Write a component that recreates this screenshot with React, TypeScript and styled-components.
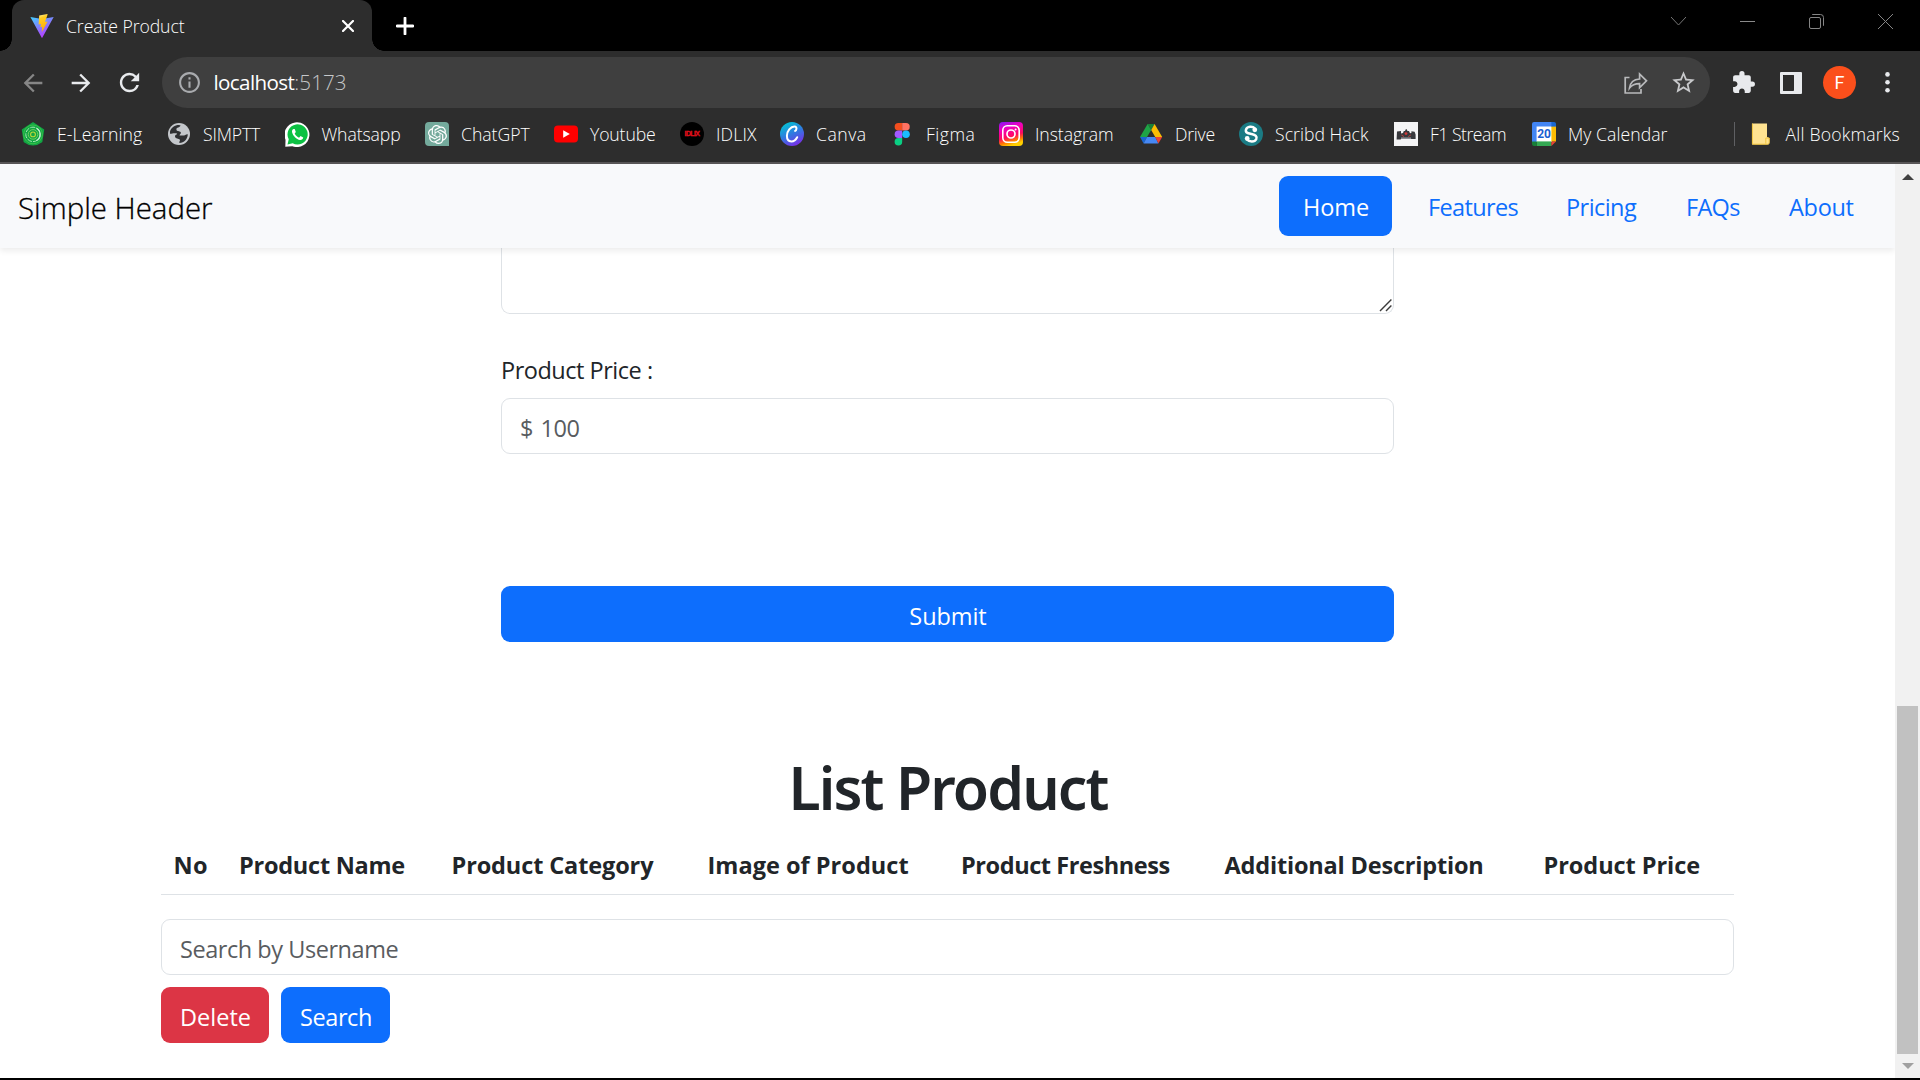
import React from 'react';
import styled, { createGlobalStyle } from 'styled-components';
import { MdArrowBack, MdArrowForward, MdExtension, MdInfoOutline, MdRefresh, MdStarBorder } from 'react-icons/md';
import { SiOpenai } from 'react-icons/si';

const GlobalStyle = createGlobalStyle`
  *, *::before, *::after { box-sizing: border-box; }
  body {
    margin: 0;
    background: #fff;
    font-family: 'Open Sans', 'Noto Sans', sans-serif;
    overflow: hidden;
  }
`;

/* ---------- browser window ---------- */

const Window = styled.div`
  width: 1920px;
  height: 1080px;
  display: flex;
  flex-direction: column;
  border-bottom: 2px solid #000;
  overflow: hidden;
`;

const TabStrip = styled.div`
  height: 51px;
  flex: none;
  display: flex;
  align-items: center;
  background: #000;
  padding-left: 12px;
`;

const Tab = styled.div`
  position: relative;
  width: 360px;
  height: 51px;
  display: flex;
  align-items: center;
  padding: 0 18px;
  background: #2d2d2d;
  border-radius: 12px 12px 0 0;

  &::before,
  &::after {
    content: '';
    position: absolute;
    bottom: 0;
    width: 12px;
    height: 12px;
  }
  &::before {
    left: -12px;
    background: radial-gradient(circle at 0 0, transparent 11.5px, #2d2d2d 12px);
  }
  &::after {
    right: -12px;
    background: radial-gradient(circle at 100% 0, transparent 11.5px, #2d2d2d 12px);
  }
`;

const ChromeText = styled.span<{ $spacing?: number; $weight?: number; $size?: number; $color?: string }>`
  font-size: ${(p) => p.$size ?? 17.64}px;
  font-weight: ${(p) => p.$weight ?? 300};
  letter-spacing: ${(p) => p.$spacing ?? 0}px;
  color: ${(p) => p.$color ?? '#fff'};
  line-height: 24px;
  white-space: nowrap;
`;

const TabTitle = styled(ChromeText)`
  margin-left: 12px;
  flex: 1;
`;

const NewTab = styled.div`
  margin-left: 24px;
  width: 18px;
  height: 18px;
  display: flex;
`;

const WindowControls = styled.div`
  margin-left: auto;
  padding: 0 27px 8px 0;
  display: flex;
  gap: 54px;
  svg { display: block; }
`;

const Toolbar = styled.div`
  height: 57px;
  flex: none;
  display: flex;
  align-items: center;
  padding: 6px 0 0 19px;
  background: #2d2d2d;
`;

const ToolIcon = styled.div<{ $width: number; $color?: string; $indent?: number }>`
  width: ${(p) => p.$width}px;
  padding-left: ${(p) => p.$indent ?? 0}px;
  flex: none;
  display: flex;
  align-items: center;
  color: ${(p) => p.$color ?? '#e8eaed'};
  svg { display: block; flex: none; }
`;

const Omnibox = styled.div`
  width: 1548px;
  height: 51px;
  flex: none;
  display: flex;
  align-items: center;
  padding: 0 14px 0 14.5px;
  border-radius: 26px;
  background: #3f3f3f;
`;

const Url = styled.div`
  flex: 1;
  display: flex;
  margin-left: 11px;
  padding-bottom: 1px;
`;

const Avatar = styled.div`
  width: 33px;
  height: 33px;
  flex: none;
  border-radius: 50%;
  background: #fb4f1b;
  color: #fff;
  font: 400 18px/33px Roboto, sans-serif;
  text-align: center;
`;

const BookmarkBar = styled.div`
  height: 56px;
  flex: none;
  display: flex;
  align-items: center;
  padding: 0 0 2px 21px;
  background: #2d2d2d;
  border-bottom: 2px solid #575556;
`;

const Bookmark = styled.div<{ $width: number }>`
  width: ${(p) => p.$width}px;
  flex: none;
  display: flex;
  align-items: center;
  gap: 12px;
  svg { display: block; flex: none; }
`;

const BookmarkDivider = styled.div`
  width: 1px;
  height: 24px;
  margin: 0 15px 0 auto;
  background: #5f6063;
`;

/* ---------- page ---------- */

const Viewport = styled.div`
  flex: 1;
  min-height: 0;
  display: flex;
`;

const Page = styled.div`
  flex: 1;
  display: flex;
  flex-direction: column;
  background: #fff;
  color: #212529;
  overflow: hidden;
`;

const Header = styled.header`
  position: relative;
  height: 84px;
  flex: none;
  display: flex;
  align-items: center;
  justify-content: space-between;
  padding: 0 16px 0 18px;
  background: #f8f9fb;
  box-shadow: 0 3px 6px rgba(0, 0, 0, 0.075);
`;

const Brand = styled.div`
  padding-top: 5px;
  font-size: 29.4px;
  font-weight: 300;
  line-height: 45px;
  color: #000;
  -webkit-text-stroke: 0.3px #000;
`;

const Nav = styled.nav`
  display: flex;
`;

const NavLink = styled.a<{ $active?: boolean; $width: number; $spacing: number }>`
  width: ${(p) => p.$width}px;
  height: 60px;
  padding: 1px 0 0 24px;
  margin-right: ${(p) => (p.$active ? 12 : 0)}px;
  border-radius: 9px;
  background: ${(p) => (p.$active ? '#0d6efd' : 'transparent')};
  color: ${(p) => (p.$active ? '#fff' : '#0d6efd')};
  font-size: 23.5px;
  line-height: 60px;
  letter-spacing: ${(p) => p.$spacing}px;
  white-space: nowrap;
`;

const Form = styled.div`
  width: 893px;
  margin-left: 501px;
  display: flex;
  flex-direction: column;
`;

const TextArea = styled.div`
  height: 66px;
  display: flex;
  align-items: flex-end;
  justify-content: flex-end;
  padding: 0 0 1px;
  border: 1px solid #dee2e6;
  border-top: 0;
  border-radius: 0 0 9px 9px;
`;

const Label = styled.label`
  margin: 38px 0 10px;
  font-size: 23.5px;
  line-height: 36px;
  letter-spacing: -0.48px;
`;

const Field = styled.div<{ $spacing: number; $wordSpacing?: number }>`
  height: 56px;
  padding: 2px 18px 0;
  border: 1px solid #dee2e6;
  border-radius: 9px;
  color: #595c5f;
  font-size: 23.5px;
  line-height: 54px;
  letter-spacing: ${(p) => p.$spacing}px;
  word-spacing: ${(p) => p.$wordSpacing ?? 0}px;
`;

const Button = styled.div<{ $width: number; $danger?: boolean; $spacing: number }>`
  width: ${(p) => p.$width}px;
  height: 56px;
  padding: 2px 0 0 1px;
  border-radius: 9px;
  background: ${(p) => (p.$danger ? '#dc3545' : '#0d6efd')};
  color: #fff;
  font-size: 23.5px;
  line-height: 56px;
  letter-spacing: ${(p) => p.$spacing}px;
  text-align: center;
`;

const SubmitRow = styled.div`
  margin-top: 132px;
`;

const List = styled.section`
  width: 1573px;
  margin: 109px 0 0 161px;
  display: flex;
  flex-direction: column;
`;

const Title = styled.h1`
  margin: 0 0 12px;
  padding-left: 1px;
  font: 600 58.8px/72px 'Noto Sans', sans-serif;
  letter-spacing: -1.86px;
  text-align: center;
`;

const Table = styled.table`
  width: 1573px;
  height: 60px;
  margin-bottom: 24px;
  table-layout: fixed;
  border-collapse: collapse;
`;

const HeadCell = styled.th<{ $width: number; $spacing: number }>`
  width: ${(p) => p.$width}px;
  padding: 12px 0 11px 12.5px;
  border-bottom: 1px solid #dee2e6;
  font-size: 23.5px;
  font-weight: 700;
  line-height: 36px;
  letter-spacing: ${(p) => p.$spacing}px;
  text-align: left;
  white-space: nowrap;
`;

const Actions = styled.div`
  display: flex;
  gap: 12px;
  margin-top: 12px;
`;

const Scrollbar = styled.div`
  width: 25px;
  display: flex;
  flex-direction: column;
  align-items: center;
  padding: 10px 0 9px;
  background: #f1f1f1;
`;

const Thumb = styled.div`
  width: 21px;
  height: 348px;
  margin: auto 0 9px;
  background: #c1c1c1;
`;

/* ---------- drawings ---------- */

const ViteIcon = () => (
  <svg width="24" height="24" viewBox="0 0 24 24">
    <defs>
      <linearGradient id="viteA" x1="0" y1="0" x2="0.6" y2="1">
        <stop offset="0" stopColor="#41d1ff" />
        <stop offset="1" stopColor="#bd34fe" />
      </linearGradient>
      <linearGradient id="viteB" x1="0.4" y1="0" x2="0.6" y2="1">
        <stop offset="0" stopColor="#ffea83" />
        <stop offset="0.2" stopColor="#ffcc20" />
        <stop offset="1" stopColor="#ffa800" />
      </linearGradient>
    </defs>
    <path d="M0.4 3 L12 5 L23.7 3 L12.4 23.6 Q12 24.2 11.6 23.6 Z" fill="url(#viteA)" />
    <path d="M17.4 0 L9.2 1.5 L8.6 10.4 L11 10 L10.3 13.3 L12.2 12.8 L11.8 18.2 L17.6 7.6 L15 8 L17.6 0.4 Z" fill="url(#viteB)" />
  </svg>
);

const CrossIcon = () => (
  <svg width="12" height="12" viewBox="0 0 12 12">
    <path d="M1 1 L11 11 M11 1 L1 11" stroke="#fff" strokeWidth="2.2" strokeLinecap="round" />
  </svg>
);

const PlusIcon = () => (
  <svg width="18" height="18" viewBox="0 0 18 18">
    <path d="M9 1 V17 M1 9 H17" stroke="#fff" strokeWidth="2.8" strokeLinecap="round" />
  </svg>
);

const ShareIcon = () => (
  <svg width="24" height="24" viewBox="0 0 24 24" fill="none" stroke="#b9babc" strokeWidth="1.7">
    <path d="M5.5 6.5 H1.2 V22 H17 V18" />
    <path d="M5.5 17 C6.2 11.5 10 8.4 15.6 8 V3 L22.5 9.8 L15.6 16.6 V12.6 C11 12.6 8 13.6 5.5 17 Z" strokeLinejoin="miter" />
  </svg>
);

const PanelIcon = () => (
  <svg width="22" height="22" viewBox="0 0 22 22">
    <rect width="22" height="22" rx="1" fill="#e8eaed" />
    <rect x="3.5" y="3.5" width="10" height="15" fill="#2d2d2d" stroke="#161616" strokeWidth="0.8" />
  </svg>
);

const DotsIcon = () => (
  <svg width="5" height="21" viewBox="0 0 5 21" fill="#e8eaed">
    <circle cx="2.5" cy="2.4" r="2.3" />
    <circle cx="2.5" cy="10.3" r="2.3" />
    <circle cx="2.5" cy="18.2" r="2.3" />
  </svg>
);

const LearningIcon = () => (
  <svg width="24" height="24" viewBox="0 0 24 24" fill="none">
    <path d="M12 1 L22.4 7.8 L20.6 19.6 Q12 26 3.4 19.6 L1.6 7.8 Z" fill="#12a544" stroke="#12a544" strokeWidth="1.6" strokeLinejoin="round" />
    <circle cx="12" cy="12.4" r="9.4" stroke="#3cc44a" strokeWidth="0.9" />
    <circle cx="12" cy="12.4" r="7.2" stroke="#a5e8b0" strokeWidth="1" strokeDasharray="5 1.2" />
    <circle cx="12" cy="12.4" r="4.8" stroke="#6fd35c" strokeWidth="1" />
    <circle cx="12" cy="12.4" r="2.4" stroke="#c0d838" strokeWidth="1.1" />
    <path d="M15.5 6.3 A7 7 0 0 1 15.5 18.5" stroke="#c8f0d0" strokeWidth="1.3" />
  </svg>
);

const GlobeIcon = () => (
  <svg width="24" height="24" viewBox="0 0 24 24">
    <circle cx="12" cy="12" r="11" fill="#c4c7cb" />
    <path d="M3 9.5 C4.2 5.6 8 3 12 3.1 L13.6 3.6 C12.6 6 9.6 5.2 9.4 7.4 C9.4 9.4 12.6 8.8 13.6 10 C14.6 11.8 12.4 12.4 12.6 13.4 H17 C18.6 13.2 19.6 11.6 20.8 12.4 C20.5 17 17 20.6 12.6 21 C11.6 19.6 14 18.6 12.4 17.2 C10.6 16.4 8 16.6 8 14.2 C8.4 12.4 10.6 12.8 10 11.6 C8 10.6 5 11.6 3 11.8 Z" fill="#2f3033" />
  </svg>
);

const WhatsappIcon = () => (
  <svg width="25" height="25" viewBox="0 0 24 24">
    <path d="M0.3 23.8 L0.5 17 A12 11.9 0 1 1 7 23.2 Z" fill="#fff" />
    <path d="M2.4 21.6 L3.6 16.6 A9.7 9.7 0 1 1 7.4 20.4 Z" fill="#0cc143" />
    <path d="M8.2 6.6 C7 7 6.5 8.4 6.8 9.8 C7.6 13.2 11 16.7 14.4 17.3 C16 17.5 17.4 16.6 17.5 14.9 L14.9 13.5 L13.5 15 C11.8 14.4 10.2 12.9 9.3 11 L10.4 9.6 L9.3 6.8 Z" fill="#fff" />
  </svg>
);

const GptBadge = styled.div`
  width: 24px;
  height: 24px;
  flex: none;
  display: flex;
  align-items: center;
  justify-content: center;
  border-radius: 4px 4px 0 4px;
  background: #74aa9c;
  color: #fff;
`;

const YoutubeIcon = () => (
  <svg width="24" height="24" viewBox="0 0 24 24">
    <rect x="0" y="3.4" width="24" height="17.2" rx="4" fill="#f00" />
    <path d="M9.2 8.2 L15.8 12 L9.2 15.8 Z" fill="#fff" />
  </svg>
);

const IdlixIcon = styled.div`
  width: 24px;
  height: 24px;
  flex: none;
  border-radius: 50%;
  background: #000;
  color: #e3101c;
  font: 700 7px/24px 'Liberation Sans', sans-serif;
  letter-spacing: -0.6px;
  text-align: center;
  -webkit-text-stroke: 0.3px #e3101c;
`;

const CanvaIcon = () => (
  <svg width="24" height="24" viewBox="0 0 24 24">
    <defs>
      <linearGradient id="canva" x1="0.2" y1="0" x2="0.7" y2="1">
        <stop offset="0" stopColor="#00c9d2" />
        <stop offset="0.5" stopColor="#2f7be0" />
        <stop offset="1" stopColor="#7d2ae8" />
      </linearGradient>
    </defs>
    <circle cx="12" cy="12" r="12" fill="url(#canva)" />
    <path d="M15 8.9 C16.6 8.6 17.4 4.7 14.6 4.5 C10.6 4.4 6.9 9.4 6.9 13.8 C6.9 17.4 8.8 19.4 11.4 19.4 C14 19.4 16 17.6 17.2 15.2" fill="none" stroke="#fff" strokeWidth="2" strokeLinecap="round" />
  </svg>
);

const FigmaIcon = () => (
  <svg width="24" height="24" viewBox="0 0 24 24">
    <path d="M12.2 1 H8.4 A3.7 3.7 0 0 0 8.4 8.5 H12.2 Z" fill="#f24e1e" />
    <path d="M12.2 1 H16 A3.7 3.7 0 0 1 16 8.5 H12.2 Z" fill="#ff7262" />
    <path d="M12.2 8.5 H8.4 A3.7 3.7 0 0 0 8.4 16 H12.2 Z" fill="#a259ff" />
    <circle cx="16" cy="12.2" r="3.8" fill="#1abcfe" />
    <path d="M8.4 16 H12.2 V19.8 A3.8 3.8 0 1 1 8.4 16 Z" fill="#0acf83" />
  </svg>
);

const InstagramIcon = () => (
  <svg width="24" height="24" viewBox="0 0 24 24" fill="none" stroke="#fff">
    <defs>
      <linearGradient id="insta" x1="0.1" y1="0" x2="0.4" y2="1">
        <stop offset="0" stopColor="#8a15f5" />
        <stop offset="0.3" stopColor="#f000c0" />
        <stop offset="0.65" stopColor="#ff0a60" />
        <stop offset="0.85" stopColor="#ff7a00" />
        <stop offset="1" stopColor="#ffd000" />
      </linearGradient>
    </defs>
    <rect width="24" height="24" rx="4" fill="url(#insta)" stroke="none" />
    <rect x="3.8" y="3.8" width="16.4" height="16.4" rx="4.4" strokeWidth="1.6" />
    <circle cx="12" cy="12" r="4" strokeWidth="1.7" />
    <circle cx="16.6" cy="7.4" r="1" fill="#fff" stroke="none" />
  </svg>
);

const DriveIcon = () => (
  <svg width="24" height="24" viewBox="0 0 24 24">
    <path d="M8.6 2 H15.6 L12.2 8 Z" fill="#188038" />
    <path d="M15.6 2 L23.2 15 H16.2 L12.2 8 Z" fill="#fbbc04" />
    <path d="M8.6 2 L12.2 8 L8 15 H1 Z" fill="#1ea446" />
    <path d="M1 15 H8 L4.6 21.4 Z" fill="#1967d2" />
    <path d="M8 15 H16.2 L19.4 21.6 H4.6 Z" fill="#4688f4" />
    <path d="M16.2 15 H23.2 L19.4 21.5 Z" fill="#ea4335" />
  </svg>
);

const ScribdIcon = () => (
  <svg width="24" height="24" viewBox="0 0 24 24">
    <circle cx="12" cy="12" r="12" fill="#1b7b84" />
    <path d="M16 6.6 C13.6 3.8 8 4.2 7 7.6 C6 11.2 10 11.4 12.6 12 C16.6 13 18.4 14.4 17.2 17.2 C15.6 20.4 10.2 20 7.8 17.4" fill="none" stroke="#fff" strokeWidth="2.5" />
    <circle cx="15.8" cy="7.8" r="2.4" fill="#fff" />
    <circle cx="8.2" cy="16.4" r="2.4" fill="#fff" />
  </svg>
);

const RacingIcon = () => (
  <svg width="24" height="24" viewBox="0 0 24 24">
    <rect width="24" height="24" fill="#f4f4f5" />
    <path d="M3 9.6 L7 9 V11.4 L9 11 L9.8 9 H11 L11.8 7.2 H12.8 L13.4 9 H15 L16 11.2 L17.4 11 V9.2 L20.6 9.8 L21.6 12.6 V17 H17.4 L16 16 H8 L6.6 17.4 H2.6 Z" fill="#38393d" />
    <path d="M7 15.4 H17 V17 H7 Z" fill="#8d8f94" />
    <circle cx="12" cy="11.6" r="1.4" fill="#d33a3a" />
    <path d="M7.4 13 L10 14.6 M16.8 13 L14.2 14.6" stroke="#b9403e" strokeWidth="1" />
  </svg>
);

const CalendarBox = styled.div`
  position: relative;
  width: 24px;
  height: 24px;
  flex: none;
  display: flex;
  align-items: center;
  justify-content: center;
  svg { position: absolute; inset: 0; }
  span {
    position: relative;
    color: #1a5fd0;
    font: 700 12px/16px Roboto, sans-serif;
    letter-spacing: -0.2px;
  }
`;

const CalendarIcon = () => (
  <CalendarBox>
    <svg width="24" height="24" viewBox="0 0 24 24">
      <rect x="4" y="4" width="16" height="16" fill="#fff" />
      <path d="M2 0 H20 V4.6 H4.6 V20 H0 V2 A2 2 0 0 1 2 0 Z" fill="#4285f4" />
      <path d="M19.4 0 H22 A2 2 0 0 1 24 2 V5 H19.4 Z" fill="#1967d2" />
      <rect x="19.4" y="4.6" width="4.6" height="15" fill="#fbbc04" />
      <path d="M4.6 19.4 H19.4 V24 H4.6 Z" fill="#34a853" />
      <path d="M0 19.4 H4.6 V24 H2 A2 2 0 0 1 0 22 Z" fill="#188038" />
      <path d="M19.4 19.4 H24 L19.4 24 Z" fill="#ea4335" />
    </svg>
    <span>20</span>
  </CalendarBox>
);

const FolderIcon = () => (
  <svg width="24" height="24" viewBox="0 0 24 24">
    <path d="M2 1.6 H17 V15 L19.4 16 V21 Q19.4 22.6 17.6 22.6 H2 Z" fill="#ffe391" />
    <path d="M2.4 1.6 V22.2 H17.6 Q19.2 22 19.2 20.6 V16 H15.8 V21.6" fill="none" stroke="#f2c53e" strokeWidth="1" />
  </svg>
);

const GripIcon = () => (
  <svg width="14" height="14" viewBox="0 0 14 14">
    <path d="M1 13 L12.4 1.6 M7 13 L12.4 7.6" stroke="#3c3c3c" strokeWidth="1.4" />
  </svg>
);

const Arrow = ({ down }: { down?: boolean }) => (
  <svg width="12" height="6" viewBox="0 0 12 6">
    <path d={down ? 'M0 0 H12 L6 6 Z' : 'M0 6 H12 L6 0 Z'} fill={down ? '#a0a0a0' : '#404040'} />
  </svg>
);

/* ---------- data ---------- */

const bookmarks: { label: string; width: number; spacing: number; icon: React.ReactNode }[] = [
  { label: 'E-Learning', width: 146, spacing: 0.1, icon: <LearningIcon /> },
  { label: 'SIMPTT', width: 117.5, spacing: -0.16, icon: <GlobeIcon /> },
  { label: 'Whatsapp', width: 140.5, spacing: -0.1, icon: <WhatsappIcon /> },
  { label: 'ChatGPT', width: 129, spacing: -0.02, icon: <GptBadge><SiOpenai size={19} /></GptBadge> },
  { label: 'Youtube', width: 126, spacing: -0.14, icon: <YoutubeIcon /> },
  { label: 'IDLIX', width: 100, spacing: 0.16, icon: <IdlixIcon>IDLIX</IdlixIcon> },
  { label: 'Canva', width: 110, spacing: 0.5, icon: <CanvaIcon /> },
  { label: 'Figma', width: 109, spacing: 0.5, icon: <FigmaIcon /> },
  { label: 'Instagram', width: 140, spacing: -0.08, icon: <InstagramIcon /> },
  { label: 'Drive', width: 100, spacing: -0.25, icon: <DriveIcon /> },
  { label: 'Scribd Hack', width: 155, spacing: 0.02, icon: <ScribdIcon /> },
  { label: 'F1 Stream', width: 138, spacing: -0.5, icon: <RacingIcon /> },
  { label: 'My Calendar', width: 160, spacing: 0.05, icon: <CalendarIcon /> },
];

const links = [
  { label: 'Home', width: 113, spacing: -0.05, active: true },
  { label: 'Features', width: 138, spacing: -0.65 },
  { label: 'Pricing', width: 120, spacing: -0.55 },
  { label: 'FAQs', width: 103, spacing: -0.7 },
  { label: 'About', width: 114, spacing: -0.3 },
];

const columns = [
  { label: 'No', width: 65.5, spacing: 0.4 },
  { label: 'Product Name', width: 212.5, spacing: -0.25 },
  { label: 'Product Category', width: 256, spacing: -0.12 },
  { label: 'Image of Product', width: 253.5, spacing: 0.03 },
  { label: 'Product Freshness', width: 263.5, spacing: -0.43 },
  { label: 'Additional Description', width: 319, spacing: -0.18 },
  { label: 'Product Price', width: 203, spacing: -0.05 },
];

export default function App() {
  return (
    <>
      <GlobalStyle />
      <Window>
        <TabStrip>
          <Tab>
            <ViteIcon />
            <TabTitle $spacing={-0.08}>Create Product</TabTitle>
            <CrossIcon />
          </Tab>
          <NewTab><PlusIcon /></NewTab>
          <WindowControls>
            <svg width="15" height="15" viewBox="0 0 15 15"><path d="M0 3 L7.5 11 L15 3" fill="none" stroke="#757575" /></svg>
            <svg width="15" height="15" viewBox="0 0 15 15"><path d="M0 7.5 H15" stroke="#8a8a8a" /></svg>
            <svg width="15" height="15" viewBox="0 0 15 15" fill="none" stroke="#858585">
              <rect x="0.5" y="3.5" width="11" height="11" rx="1.5" />
              <path d="M3.2 0.5 H11.5 Q14.5 0.5 14.5 3.5 V11.8" />
            </svg>
            <svg width="15" height="15" viewBox="0 0 15 15"><path d="M0 0 L15 15 M15 0 L0 15" stroke="#858585" /></svg>
          </WindowControls>
        </TabStrip>

        <Toolbar>
          <ToolIcon $width={48} $color="#868686"><MdArrowBack size={28} /></ToolIcon>
          <ToolIcon $width={48}><MdArrowForward size={28} /></ToolIcon>
          <ToolIcon $width={47}><MdRefresh size={29} /></ToolIcon>
          <Omnibox>
            <ToolIcon $width={26} $color="#a9abae"><MdInfoOutline size={25} /></ToolIcon>
            <Url>
              <ChromeText $size={20.6} $weight={400} $spacing={-0.61}>localhost</ChromeText>
              <ChromeText $size={20.6} $spacing={0.1} $color="#c6c8ca">:5173</ChromeText>
            </Url>
            <ToolIcon $width={46}><ShareIcon /></ToolIcon>
            <ToolIcon $width={26} $color="#c8c9cb"><MdStarBorder size={27} /></ToolIcon>
          </Omnibox>
          <ToolIcon $width={70} $indent={20.5}><MdExtension size={25} /></ToolIcon>
          <ToolIcon $width={43}><PanelIcon /></ToolIcon>
          <Avatar>F</Avatar>
          <ToolIcon $width={60} $indent={28.5}><DotsIcon /></ToolIcon>
        </Toolbar>

        <BookmarkBar>
          {bookmarks.map((b) => (
            <Bookmark key={b.label} $width={b.width}>
              {b.icon}
              <ChromeText $spacing={b.spacing}>{b.label}</ChromeText>
            </Bookmark>
          ))}
          <BookmarkDivider />
          <Bookmark $width={170.5}>
            <FolderIcon />
            <ChromeText $spacing={0.2}>All Bookmarks</ChromeText>
          </Bookmark>
        </BookmarkBar>

        <Viewport>
          <Page>
            <Header>
              <Brand>Simple Header</Brand>
              <Nav>
                {links.map((l) => (
                  <NavLink key={l.label} $width={l.width} $spacing={l.spacing} $active={l.active}>
                    {l.label}
                  </NavLink>
                ))}
              </Nav>
            </Header>

            <Form>
              <TextArea><GripIcon /></TextArea>
              <Label>Product Price :</Label>
              <Field $spacing={-0.5} $wordSpacing={2}>$ 100</Field>
              <SubmitRow>
                <Button $width={893} $spacing={-0.08}>Submit</Button>
              </SubmitRow>
            </Form>

            <List>
              <Title>List Product</Title>
              <Table>
                <thead>
                  <tr>
                    {columns.map((c) => (
                      <HeadCell key={c.label} $width={c.width} $spacing={c.spacing}>{c.label}</HeadCell>
                    ))}
                  </tr>
                </thead>
              </Table>
              <Field $spacing={-0.45}>Search by Username</Field>
              <Actions>
                <Button $width={108} $danger $spacing={0.04}>Delete</Button>
                <Button $width={109} $spacing={-0.41}>Search</Button>
              </Actions>
            </List>
          </Page>
          <Scrollbar>
            <Arrow />
            <Thumb />
            <Arrow down />
          </Scrollbar>
        </Viewport>
      </Window>
    </>
  );
}
